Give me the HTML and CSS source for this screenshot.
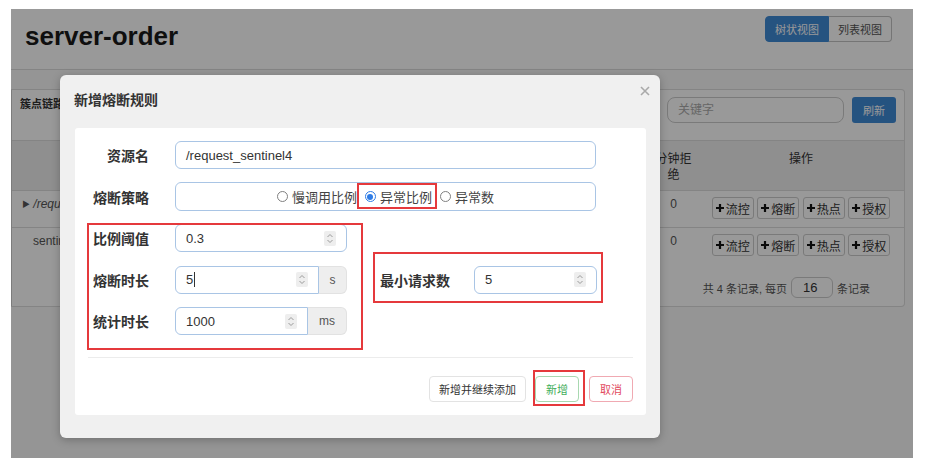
FILE: index.html
```html
<!DOCTYPE html>
<html lang="zh-CN">
<head>
<meta charset="utf-8">
<title>server-order</title>
<link rel="stylesheet" href="styles.css">
</head>
<body>
<div class="screen">
  <div class="page">
    <header class="topbar">
      <h1 class="app-title">server-order</h1>
      <div class="view-toggle">
        <button class="vt-btn active">树状视图</button>
        <button class="vt-btn">列表视图</button>
      </div>
    </header>

    <section class="card">
      <div class="card-head">
        <span class="card-title">簇点链路</span>
        <div class="search">
          <div class="search-input">关键字</div>
          <button class="btn-refresh">刷新</button>
        </div>
      </div>
      <table class="res-table">
        <colgroup><col class="w-name"><col class="w-rej"><col class="w-op"></colgroup>
        <thead>
          <tr><th class="c-name">资源名</th><th class="c-rej">分钟拒绝</th><th class="c-op">操作</th></tr>
        </thead>
        <tbody>
          <tr>
            <td class="c-name lv1"><span class="tri">▶</span> /request_sentinel4</td>
            <td class="c-rej">0</td>
            <td class="c-op">
              <span class="ops">
                <button class="opbtn"><svg class="plus" viewBox="0 0 8 8"><path d="M4 0v8M0 4h8"/></svg>流控</button>
                <button class="opbtn"><svg class="plus" viewBox="0 0 8 8"><path d="M4 0v8M0 4h8"/></svg>熔断</button>
                <button class="opbtn"><svg class="plus" viewBox="0 0 8 8"><path d="M4 0v8M0 4h8"/></svg>热点</button>
                <button class="opbtn"><svg class="plus" viewBox="0 0 8 8"><path d="M4 0v8M0 4h8"/></svg>授权</button>
              </span>
            </td>
          </tr>
          <tr>
            <td class="c-name lv2">sentinel_default_context</td>
            <td class="c-rej">0</td>
            <td class="c-op">
              <span class="ops">
                <button class="opbtn"><svg class="plus" viewBox="0 0 8 8"><path d="M4 0v8M0 4h8"/></svg>流控</button>
                <button class="opbtn"><svg class="plus" viewBox="0 0 8 8"><path d="M4 0v8M0 4h8"/></svg>熔断</button>
                <button class="opbtn"><svg class="plus" viewBox="0 0 8 8"><path d="M4 0v8M0 4h8"/></svg>热点</button>
                <button class="opbtn"><svg class="plus" viewBox="0 0 8 8"><path d="M4 0v8M0 4h8"/></svg>授权</button>
              </span>
            </td>
          </tr>
        </tbody>
      </table>
      <div class="pager"><span>共 4 条记录, 每页</span><span class="page-size">16</span><span>条记录</span></div>
    </section>
  </div>

  <div class="backdrop"></div>

  <div class="modal" role="dialog">
    <div class="modal-head">
      <h2 class="modal-title">新增熔断规则</h2>
      <button class="close" aria-label="关闭"><svg viewBox="0 0 10 10"><path d="M1 1l8 8M9 1l-8 8"/></svg></button>
    </div>
    <div class="modal-body">
      <div class="form">
        <div class="frow">
          <label class="flabel">资源名</label>
          <div class="field w-full"><span class="val">/request_sentinel4</span></div>
        </div>
        <div class="frow">
          <label class="flabel">熔断策略</label>
          <div class="radio-box">
            <span class="radio"><i class="dot"></i>慢调用比例</span>
            <span class="radio on"><i class="dot"></i>异常比例</span>
            <span class="radio"><i class="dot"></i>异常数</span>
          </div>
        </div>
        <div class="split">
          <div class="col-left">
            <div class="frow">
              <label class="flabel">比例阈值</label>
              <div class="field w-172"><span class="val">0.3</span>
                <svg class="spin" viewBox="0 0 12 15"><rect width="12" height="15" rx="2"/><path d="M3.5 6 6 3.5 8.5 6M3.5 9 6 11.5 8.5 9"/></svg>
              </div>
            </div>
            <div class="frow">
              <label class="flabel">熔断时长</label>
              <div class="igroup">
                <div class="field grp"><span class="val">5</span><span class="caret"></span>
                  <svg class="spin" viewBox="0 0 12 15"><rect width="12" height="15" rx="2"/><path d="M3.5 6 6 3.5 8.5 6M3.5 9 6 11.5 8.5 9"/></svg>
                </div>
                <span class="addon a-s">s</span>
              </div>
            </div>
            <div class="frow">
              <label class="flabel">统计时长</label>
              <div class="igroup">
                <div class="field grp"><span class="val">1000</span>
                  <svg class="spin" viewBox="0 0 12 15"><rect width="12" height="15" rx="2"/><path d="M3.5 6 6 3.5 8.5 6M3.5 9 6 11.5 8.5 9"/></svg>
                </div>
                <span class="addon a-ms">ms</span>
              </div>
            </div>
          </div>
          <div class="col-right">
            <div class="frow">
              <label class="flabel wide">最小请求数</label>
              <div class="field w-123"><span class="val">5</span>
                <svg class="spin" viewBox="0 0 12 15"><rect width="12" height="15" rx="2"/><path d="M3.5 6 6 3.5 8.5 6M3.5 9 6 11.5 8.5 9"/></svg>
              </div>
            </div>
          </div>
        </div>
      </div>
      <div class="sep"></div>
      <div class="modal-foot">
        <button class="mbtn">新增并继续添加</button>
        <button class="mbtn ok">新增</button>
        <button class="mbtn cancel">取消</button>
      </div>

      <span class="mark m-radio"></span>
      <span class="mark m-left"></span>
      <span class="mark m-right"></span>
      <span class="mark m-ok"></span>
    </div>
  </div>
</div>
</body>
</html>
```

FILE: styles.css
```css
* { box-sizing: border-box; }

body {
  margin: 0;
  background: #fff;
  font-family: "Liberation Sans", "Noto Sans CJK SC", sans-serif;
  color: #333;
}

button { font-family: inherit; cursor: pointer; }

.screen {
  position: relative;
  width: 902px;
  height: 449px;
  margin: 9px 0 0 11px;
  overflow: hidden;
  background: #f9f9f9;
}

/* ---------- background page ---------- */
.topbar {
  display: flex;
  justify-content: space-between;
  align-items: flex-start;
  height: 61px;
  padding: 0 21px 0 14px;
  border-bottom: 1px solid #dcdcdc;
  background: #fff;
}

.app-title {
  margin: 12px 0 0;
  font-size: 26px;
  line-height: 30px;
  font-weight: bold;
  color: #1a1a1a;
}

.view-toggle { display: flex; margin-top: 7px; }

.vt-btn {
  height: 26px;
  padding: 0 9px;
  font-size: 11px;
  border: 1px solid #c4c4c4;
  background: #fff;
  color: #555;
  border-radius: 0 4px 4px 0;
  border-left: none;
}

.vt-btn.active {
  background: #3f8ad6;
  border: 1px solid #3f8ad6;
  color: #fff;
  border-radius: 4px 0 0 4px;
}

.card {
  margin: 19px 8px 0 0;
  background: #fff;
  border: 1px solid #dcdcdc;
  border-left-color: #cfcfcf;
  border-radius: 0 4px 4px 0;
}

.card-head {
  display: flex;
  justify-content: space-between;
  align-items: flex-start;
  height: 50px;
  padding: 7px 8px 0 8px;
}

.card-title {
  font-size: 11px;
  line-height: 14px;
  font-weight: bold;
  color: #333;
}

.search { display: flex; gap: 8px; }

.search-input {
  width: 177px;
  height: 26px;
  padding-left: 10px;
  border: 1px solid #ccc;
  border-radius: 8px;
  font-size: 12px;
  line-height: 24px;
  color: #aaa;
  background: #fff;
}

.btn-refresh {
  width: 44px;
  height: 26px;
  border: none;
  border-radius: 3px;
  background: #3f8ad6;
  color: #fff;
  font-size: 11px;
}

.res-table {
  width: 100%;
  table-layout: fixed;
  border-collapse: collapse;
  font-size: 12px;
}

.w-name { width: 637px; }
.w-rej { width: 49px; }
.w-op { width: 206px; }

.res-table th {
  padding: 10px 4px 7px;
  line-height: 16px;
  font-weight: normal;
  color: #333;
  background: #eee;
  vertical-align: top;
  text-align: center;
  border-top: 1px solid #dcdcdc;
}

.res-table th.c-name { color: transparent; }

.res-table td {
  padding: 6px 4px 8px;
  line-height: 14px;
  vertical-align: top;
  border-top: 1px solid #dcdcdc;
  color: #555;
  white-space: nowrap;
  overflow: hidden;
}

.res-table td.c-rej, .res-table td.c-op { text-align: center; }
.res-table td.lv1 { padding-left: 10px; font-style: italic; }
.res-table td.lv2 { padding-left: 21px; }
.tri { font-style: normal; font-size: 8px; color: #555; vertical-align: 1px; }

.ops { display: inline-flex; gap: 3.5px; }

.opbtn {
  display: inline-flex;
  align-items: center;
  gap: 2px;
  height: 22px;
  padding: 0 3px;
  border: 1px solid #ccc;
  border-radius: 3px;
  background: #fff;
  font-size: 12px;
  color: #333;
}

.plus { width: 8px; height: 8px; }
.plus path { stroke: #111; stroke-width: 2.2; fill: none; }

.pager {
  display: flex;
  justify-content: flex-end;
  align-items: center;
  gap: 4px;
  padding: 13px 34px 8px 0;
  font-size: 11px;
  color: #555;
}

.page-size {
  width: 42px;
  height: 21px;
  padding-left: 11px;
  border: 1px solid #ccc;
  border-radius: 6px;
  font-size: 13px;
  line-height: 19px;
  color: #333;
}

.backdrop {
  position: absolute;
  inset: 0;
  background: rgba(0, 0, 0, 0.4);
}

/* ---------- modal ---------- */
.modal {
  position: absolute;
  left: 49px;
  top: 66px;
  width: 600px;
  height: 363px;
  background: #f0f0f0;
  border-radius: 6px;
  box-shadow: 0 2px 8px rgba(0, 0, 0, 0.25);
}

.modal-head {
  position: relative;
  height: 53px;
  padding: 15px 0 0 14px;
}

.modal-title {
  margin: 0;
  font-size: 14px;
  line-height: 20px;
  font-weight: bold;
  color: #333;
}

.close {
  position: absolute;
  top: 10px;
  right: 9px;
  width: 11px;
  height: 11px;
  padding: 0;
  border: none;
  background: none;
}

.close svg { display: block; width: 10px; height: 10px; }
.close path { stroke: #a9a9a9; stroke-width: 1.6; fill: none; }

.modal-body {
  position: relative;
  margin: 0 14px 0 15px;
  background: #fff;
  border-radius: 3px;
}

.form {
  display: flex;
  flex-direction: column;
  gap: 13.5px;
  padding: 13px 13px 0;
}

.frow {
  display: flex;
  align-items: center;
  height: 28px;
}

.flabel {
  width: 61px;
  margin-right: 26px;
  text-align: right;
  font-size: 14px;
  font-weight: bold;
  color: #333;
  white-space: nowrap;
}

.flabel.wide { width: 70px; margin-right: 24px; text-align: left; }

.field {
  display: flex;
  align-items: center;
  height: 28px;
  padding-left: 10px;
  border: 1px solid #a9c5e5;
  border-radius: 6px;
  font-size: 13px;
  color: #333;
  background: #fff;
}

.w-full { width: 421px; }
.w-172 { width: 172px; }
.w-123 { width: 123px; }

.caret {
  width: 1px;
  height: 15px;
  margin-left: 1px;
  background: #333;
}

.spin {
  width: 12px;
  height: 15px;
  margin-left: auto;
  margin-right: 10px;
}

.spin rect { fill: #eeeeee; }
.spin path { fill: none; stroke: #9a9a9a; stroke-width: 1; }

.radio-box {
  display: flex;
  justify-content: center;
  align-items: center;
  gap: 8px;
  width: 421px;
  height: 29px;
  border: 1px solid #a9c5e5;
  border-radius: 6px;
  font-size: 13px;
  color: #444;
}

.radio { display: inline-flex; align-items: center; }

.dot {
  position: relative;
  width: 11px;
  height: 11px;
  margin-right: 4px;
  border: 1.5px solid #808080;
  border-radius: 50%;
  background: #fff;
}

.radio.on .dot { border-color: #2e7ce6; }

.radio.on .dot::after {
  content: "";
  position: absolute;
  inset: 1.5px;
  border-radius: 50%;
  background: #2e7ce6;
}

.split { display: flex; align-items: center; }

.col-left {
  display: flex;
  flex-direction: column;
  gap: 13.5px;
}

.col-right { margin-left: 33px; }

.igroup { display: flex; width: 172px; height: 28px; }

.field.grp {
  flex: 1;
  border-radius: 6px 0 0 6px;
}

.addon {
  display: flex;
  align-items: center;
  justify-content: center;
  height: 28px;
  border: 1px solid #e2e2e2;
  border-left: none;
  border-radius: 0 6px 6px 0;
  background: #eee;
  font-size: 12px;
  color: #555;
}

.a-s { width: 28px; }
.a-ms { width: 39px; }

.sep {
  height: 1px;
  margin: 22px 13px 0;
  background: #ececec;
}

.modal-foot {
  display: flex;
  justify-content: flex-end;
  gap: 9px;
  padding: 18px 13px 13px;
}

.mbtn {
  height: 26px;
  padding: 0 9px;
  border: 1px solid #e3e3e3;
  border-radius: 4px;
  background: #fff;
  font-size: 11px;
  color: #333;
}

.mbtn.ok {
  padding: 0 10px;
  border-color: #a8d8b0;
  color: #3fae5a;
}

.mbtn.cancel {
  padding: 0 10px;
  margin-left: 1px;
  border-color: #f0a9b2;
  color: #e2495e;
}

/* red annotation frames drawn over the dialog */
.mark {
  position: absolute;
  border: 2px solid #e5393c;
  pointer-events: none;
}

.m-radio { left: 282px; top: 55px; width: 80px; height: 26px; }
.m-left { left: 12px; top: 95px; width: 276px; height: 127px; }
.m-right { left: 298px; top: 124px; width: 230px; height: 51px; }
.m-ok { left: 458px; top: 242px; width: 52px; height: 36px; }
```
